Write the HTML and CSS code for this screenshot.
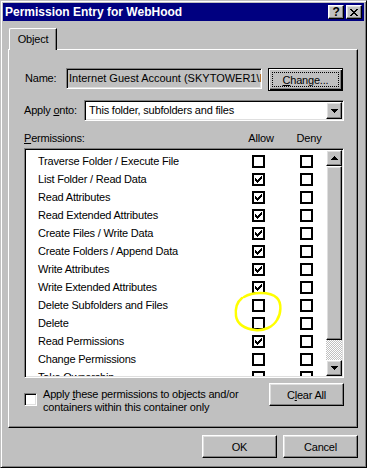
FILE: index.html
```html
<!DOCTYPE html>
<html lang="en">
<head>
    <meta charset="UTF-8">
    <title>Permission Entry for WebHood</title>
    <link rel="stylesheet" href="styles.css">
</head>
<body>

<svg class="defs" width="0" height="0">
    <symbol id="tick" viewBox="0 0 7 7">
        <rect x="6" y="0" width="1" height="1"/>
        <rect x="5" y="1" width="2" height="1"/>
        <rect x="0" y="2" width="1" height="1"/>
        <rect x="4" y="2" width="3" height="1"/>
        <rect x="0" y="3" width="2" height="1"/>
        <rect x="3" y="3" width="3" height="1"/>
        <rect x="0" y="4" width="5" height="1"/>
        <rect x="1" y="5" width="3" height="1"/>
        <rect x="2" y="6" width="1" height="1"/>
    </symbol>
    <symbol id="arrow-up" viewBox="0 0 7 4">
        <path d="M3 0h1v1h1v1h1v1h1v1H0V3h1V2h1V1h1z"/>
    </symbol>
    <symbol id="arrow-down" viewBox="0 0 7 4">
        <path d="M0 0h7v1H6v1H5v1H4v1H3V3H2V2H1V1H0z"/>
    </symbol>
</svg>

<div class="window">
    <div class="titlebar">
        <span class="title">Permission Entry for WebHood</span>
        <span class="tbtn raised">?</span>
        <span class="tbtn raised">
            <svg width="8" height="7" viewBox="0 0 8 7">
                <path d="M0 0h2v1h1v1h2V1h1V0h2v1H7v1H6v1H5v1h1v1h1v1h1v1H6V6H5V5H3v1H2v1H0V6h1V5h1V4h1V3H2V2H1V1H0z"/>
            </svg>
        </span>
    </div>

    <div class="content">
        <div class="tabs">
            <div class="tab">Object</div>
        </div>

        <div class="panel">
            <div class="name-row">
                <span class="name-label">Name:</span>
                <div class="field">Internet Guest Account (SKYTOWER1\IUSR_SKYTOWER1)</div>
                <button class="btn default"><span class="focus"><u>C</u>hange...</span></button>
            </div>

            <div class="apply-row">
                <span class="apply-label">Apply <u>o</u>nto:</span>
                <div class="combo">
                    <span class="combo-text">This folder, subfolders and files</span>
                    <span class="combo-btn raised"><svg width="7" height="4"><use href="#arrow-down"/></svg></span>
                </div>
            </div>

            <div class="perm-head">
                <span class="perm-title"><u>P</u>ermissions:</span>
                <span class="col">Allow</span>
                <span class="col deny">Deny</span>
            </div>

            <div class="list">
                <div class="items" id="items"></div>
                <div class="scrollbar">
                    <span class="sb-btn raised"><svg width="7" height="4"><use href="#arrow-up"/></svg></span>
                    <span class="thumb raised"></span>
                    <span class="track"></span>
                    <span class="sb-btn raised"><svg width="7" height="4"><use href="#arrow-down"/></svg></span>
                </div>
            </div>

            <div class="bottom-row">
                <div class="inherit">
                    <span class="check3d"></span>
                    <span class="inherit-text">Apply <u>t</u>hese permissions to objects and/or<br>containers within this container only</span>
                </div>
                <button class="btn">C<u>l</u>ear All</button>
            </div>
        </div>

        <div class="footer">
            <button class="btn">OK</button>
            <button class="btn">Cancel</button>
        </div>
    </div>

    <svg class="marker" width="56" height="46" viewBox="0 0 56 46">
        <path d="M14 7 C22 2 40 1 47 8 C52 13 51 24 47 30 C43 37 34 41 25 40 C15 39 7 34 6 26 C5 18 7 12 12 8"/>
    </svg>
</div>

<script>
    const permissions = [
        { name: "Traverse Folder / Execute File", allow: false },
        { name: "List Folder / Read Data", allow: true },
        { name: "Read Attributes", allow: true },
        { name: "Read Extended Attributes", allow: true },
        { name: "Create Files / Write Data", allow: true },
        { name: "Create Folders / Append Data", allow: true },
        { name: "Write Attributes", allow: true },
        { name: "Write Extended Attributes", allow: true },
        { name: "Delete Subfolders and Files", allow: false },
        { name: "Delete", allow: false },
        { name: "Read Permissions", allow: true },
        { name: "Change Permissions", allow: false },
        { name: "Take Ownership", allow: false }
    ];

    function checkbox(on) {
        if (on) {
            return '<span class="cb"><svg width="7" height="7"><use href="#tick"/></svg></span>';
        }
        return '<span class="cb"></span>';
    }

    const items = document.getElementById("items");
    permissions.forEach(function (p) {
        const row = document.createElement("div");
        row.className = "item";
        row.innerHTML = '<span class="perm-name">' + p.name + '</span>' + checkbox(p.allow) + checkbox(false);
        items.appendChild(row);
    });
</script>
</body>
</html>
```

FILE: styles.css
```css
body {
    margin: 0;
    background-color: #c0c0c0;
    font-family: "Liberation Sans", Arial, sans-serif;
    font-size: 11px;
    letter-spacing: -0.2px;
    color: #000;
}

.defs {
    position: absolute;
    width: 0;
    height: 0;
}

.raised {
    box-sizing: border-box;
    background-color: #c0c0c0;
    border: 1px solid;
    border-color: #fff #000 #000 #fff;
    box-shadow: inset -1px -1px #808080, inset 1px 1px #dfdfdf;
}

.window {
    position: relative;
    width: 367px;
    height: 468px;
    box-sizing: border-box;
    border: 1px solid;
    border-color: #c0c0c0 #000 #000 #c0c0c0;
    box-shadow: inset 1px 1px #fff, inset -1px -1px #808080;
    padding: 2px;
}

.titlebar {
    height: 18px;
    background-color: #000080;
    display: flex;
    align-items: center;
    padding: 0 2px;
}

.title {
    flex: 1;
    color: #fff;
    font-weight: bold;
    font-size: 12px;
    letter-spacing: 0;
}

.tbtn {
    width: 16px;
    height: 14px;
    margin-left: 2px;
    display: flex;
    align-items: center;
    justify-content: center;
    font-weight: bold;
    font-size: 12px;
    line-height: 12px;
}

.content {
    padding: 7px 6px 0 5px;
}

.tabs {
    display: flex;
    padding-left: 1px;
    margin-bottom: -1px;
}

.tab {
    position: relative;
    z-index: 1;
    width: 48px;
    height: 22px;
    box-sizing: border-box;
    background-color: #c0c0c0;
    border: 1px solid;
    border-color: #fff #000 transparent #fff;
    border-bottom: none;
    border-top-left-radius: 2px;
    box-shadow: inset -1px 0 #808080;
    text-align: center;
    line-height: 20px;
}

.panel {
    width: 350px;
    height: 379px;
    box-sizing: border-box;
    border: 1px solid;
    border-color: #fff #000 #000 #fff;
    box-shadow: inset -1px -1px #808080;
    padding: 18px 13px 0 15px;
}

.btn {
    width: 75px;
    height: 23px;
    padding: 0;
    margin: 0;
    font: inherit;
    letter-spacing: inherit;
    color: #000;
    background-color: #c0c0c0;
    box-sizing: border-box;
    border: 1px solid;
    border-color: #fff #000 #000 #fff;
    box-shadow: inset -1px -1px #808080, inset 1px 1px #dfdfdf;
    display: flex;
    align-items: center;
    justify-content: center;
}

.btn.default {
    border-color: #000;
    box-shadow: inset 1px 1px #fff, inset -1px -1px #000, inset -2px -2px #808080;
}

.focus {
    width: 67px;
    height: 15px;
    box-sizing: border-box;
    border: 1px dotted #000;
    display: flex;
    align-items: center;
    justify-content: center;
}

.name-row {
    display: flex;
    align-items: flex-start;
    height: 23px;
}

.name-label {
    width: 42px;
    padding-left: 1px;
    box-sizing: border-box;
    line-height: 21px;
}

.field {
    width: 196px;
    height: 21px;
    box-sizing: border-box;
    border: 1px solid;
    border-color: #808080 #fff #fff #808080;
    box-shadow: inset 1px 1px #000, inset -1px -1px #dfdfdf;
    padding-left: 2px;
    line-height: 18px;
    letter-spacing: 0;
    white-space: nowrap;
    overflow: hidden;
}

.name-row .btn,
.bottom-row .btn {
    margin-left: 6px;
}

.apply-row {
    display: flex;
    margin-top: 9px;
    height: 21px;
}

.apply-label {
    width: 60px;
    line-height: 20px;
}

.combo {
    width: 260px;
    height: 21px;
    box-sizing: border-box;
    border: 1px solid;
    border-color: #808080 #fff #fff #808080;
    box-shadow: inset 1px 1px #000, inset -1px -1px #dfdfdf;
    background-color: #fff;
    padding: 1px;
    display: flex;
}

.combo-text {
    flex: 1;
    padding-left: 3px;
    line-height: 17px;
}

.combo-btn {
    width: 16px;
    height: 17px;
    display: flex;
    align-items: center;
    justify-content: center;
}

.perm-head {
    display: flex;
    margin-top: 11px;
    height: 13px;
    line-height: 13px;
    padding-right: 20px;
}

.perm-title {
    flex: 1;
}

.col {
    width: 30px;
    text-align: center;
}

.col.deny {
    margin-left: 18px;
}

.list {
    margin-top: 3px;
    width: 320px;
    height: 230px;
    box-sizing: border-box;
    border: 1px solid;
    border-color: #808080 #fff #fff #808080;
    box-shadow: inset 1px 1px #000, inset -1px -1px #dfdfdf;
    background-color: #fff;
    padding: 1px;
    display: flex;
}

.items {
    flex: 1;
    padding-top: 2px;
    overflow: hidden;
}

.item {
    height: 18px;
    display: flex;
    align-items: center;
}

.perm-name {
    width: 226px;
    padding-left: 12px;
    box-sizing: border-box;
    white-space: nowrap;
}

.cb {
    width: 13px;
    height: 13px;
    box-sizing: border-box;
    border: 2px solid #000;
    background-color: #fff;
    display: flex;
    align-items: center;
    justify-content: center;
}

.cb + .cb {
    margin-left: 35px;
}

.scrollbar {
    width: 16px;
    display: flex;
    flex-direction: column;
}

.sb-btn {
    height: 16px;
    display: flex;
    align-items: center;
    justify-content: center;
}

.thumb {
    height: 174px;
}

.track {
    flex: 1;
    background-image: repeating-conic-gradient(#c0c0c0 0 25%, #fff 0 50%);
    background-size: 2px 2px;
}

.bottom-row {
    display: flex;
    margin-top: 5px;
    height: 23px;
}

.inherit {
    flex: 1;
    display: flex;
    align-items: flex-start;
}

.check3d {
    width: 13px;
    height: 13px;
    box-sizing: border-box;
    margin-top: 10px;
    border: 1px solid;
    border-color: #808080 #fff #fff #808080;
    box-shadow: inset 1px 1px #000, inset -1px -1px #dfdfdf;
    background-color: #fff;
}

.inherit-text {
    margin-top: 5px;
    margin-left: 6px;
    line-height: 13px;
    white-space: nowrap;
}

.footer {
    display: flex;
    justify-content: flex-end;
    gap: 6px;
    margin-top: 7px;
    width: 350px;
}

.marker {
    position: absolute;
    left: 229px;
    top: 289px;
}

.marker path {
    fill: none;
    stroke: #ffff00;
    stroke-width: 2.5;
    stroke-linecap: round;
}
```
